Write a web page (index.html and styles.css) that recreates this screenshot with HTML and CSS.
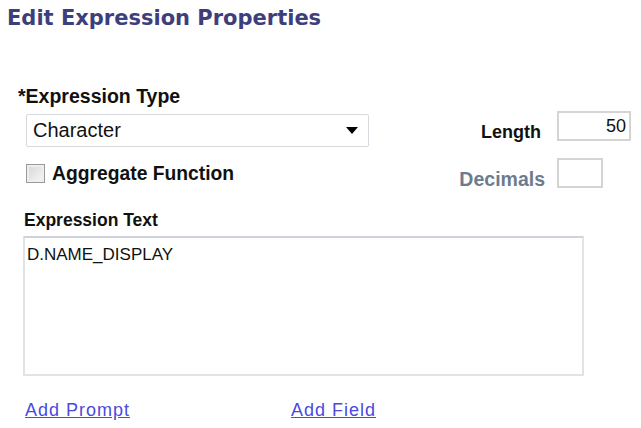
FILE: index.html
```html
<!DOCTYPE html>
<html>
<head>
<meta charset="utf-8">
<link rel="stylesheet" href="styles.css">
</head>
<body>
<div class="page">
  <h1 class="title">Edit Expression Properties</h1>
  <div class="top">
    <div class="left">
      <div class="label type-label">*Expression Type</div>
      <div class="select">
        <span class="select-text">Character</span>
        <span class="arrow"></span>
      </div>
      <div class="check-row">
        <span class="checkbox"></span>
        <span class="label agg">Aggregate Function</span>
      </div>
    </div>
    <div class="right">
      <div class="field-row len-row">
        <span class="label len-label">Length</span>
        <span class="input len">50</span>
      </div>
      <div class="field-row dec-row">
        <span class="label muted">Decimals</span>
        <span class="input dec"></span>
      </div>
    </div>
  </div>
  <div class="label text-label">Expression Text</div>
  <div class="textarea">D.NAME_DISPLAY</div>
  <div class="links">
    <a class="link prompt" href="#">Add Prompt</a>
    <a class="link" href="#">Add Field</a>
  </div>
</div>
</body>
</html>
```
FILE: styles.css
```css
html, body {
  margin: 0;
  padding: 0;
  background: #ffffff;
}
.page {
  font-family: "Liberation Sans", Arial, sans-serif;
  color: #000;
  padding: 6px 0 0 7px;
  width: 634px;
}
.title {
  margin: 0;
  font-family: "DejaVu Sans", Verdana, sans-serif;
  font-size: 21px;
  font-weight: bold;
  color: #3d3f7c;
  line-height: 25px;
}
.top {
  display: flex;
  margin-top: 55px;
}
.left {
  width: 440px;
}
.label {
  font-size: 18px;
  font-weight: bold;
  line-height: 21px;
  color: #111;
}
.muted {
  color: #6e7b8e;
}
.type-label {
  margin-left: 11px;
  font-size: 19.5px;
}
.select {
  margin: 7px 0 0 19px;
  width: 341px;
  height: 31px;
  border: 1px solid #d6d9de;
  border-radius: 2px;
  display: flex;
  align-items: center;
  justify-content: space-between;
}
.select-text {
  font-size: 20px;
  padding-left: 6px;
  color: #111;
}
.arrow {
  width: 0;
  height: 0;
  border-left: 6px solid transparent;
  border-right: 6px solid transparent;
  border-top: 7px solid #000;
  margin-right: 10px;
}
.check-row {
  display: flex;
  align-items: center;
  margin: 16px 0 0 19px;
}
.checkbox {
  width: 17px;
  height: 17px;
  border: 1px solid #9a9a9a;
  background: linear-gradient(135deg, #d6d6d6, #f7f7f7);
  box-shadow: inset 0 0 0 2px #eeeeee;
  margin-right: 7px;
}
.agg {
  font-size: 19.3px;
}
.right {
  flex: 1;
  display: flex;
  flex-direction: column;
  align-items: flex-end;
  padding-right: 10px;
  margin-top: 25px;
}
.field-row {
  display: flex;
  align-items: flex-end;
}
.len-label {
  font-size: 18px;
  margin-right: 16px;
  margin-bottom: -2px;
}
.input {
  display: block;
  border: 2px solid #d4d4d4;
  box-sizing: border-box;
  font-size: 18px;
  color: #111;
  text-align: right;
}
.len {
  width: 74px;
  height: 30px;
  line-height: 26px;
  padding-right: 3px;
}
.dec-row {
  margin-top: 17px;
  margin-right: 28px;
}
.dec-row .label {
  font-size: 19.5px;
  margin-right: 12px;
  margin-bottom: -2px;
}
.dec {
  width: 46px;
  height: 30px;
}
.text-label {
  margin: 22px 0 0 17px;
  font-size: 17.5px;
}
.textarea {
  margin: 5px 0 0 16px;
  width: 561px;
  height: 140px;
  border: 2px solid #e1e3e8;
  border-top-color: #cfd2d8;
  font-size: 17px;
  color: #111;
  padding: 7px 2px;
  box-sizing: border-box;
  line-height: 19px;
}
.links {
  display: flex;
  margin: 24px 0 0 18px;
}
.link {
  font-size: 18px;
  letter-spacing: 1px;
  line-height: 21px;
  color: #4a4adf;
  text-decoration: underline;
}
.prompt {
  width: 266px;
}
```
